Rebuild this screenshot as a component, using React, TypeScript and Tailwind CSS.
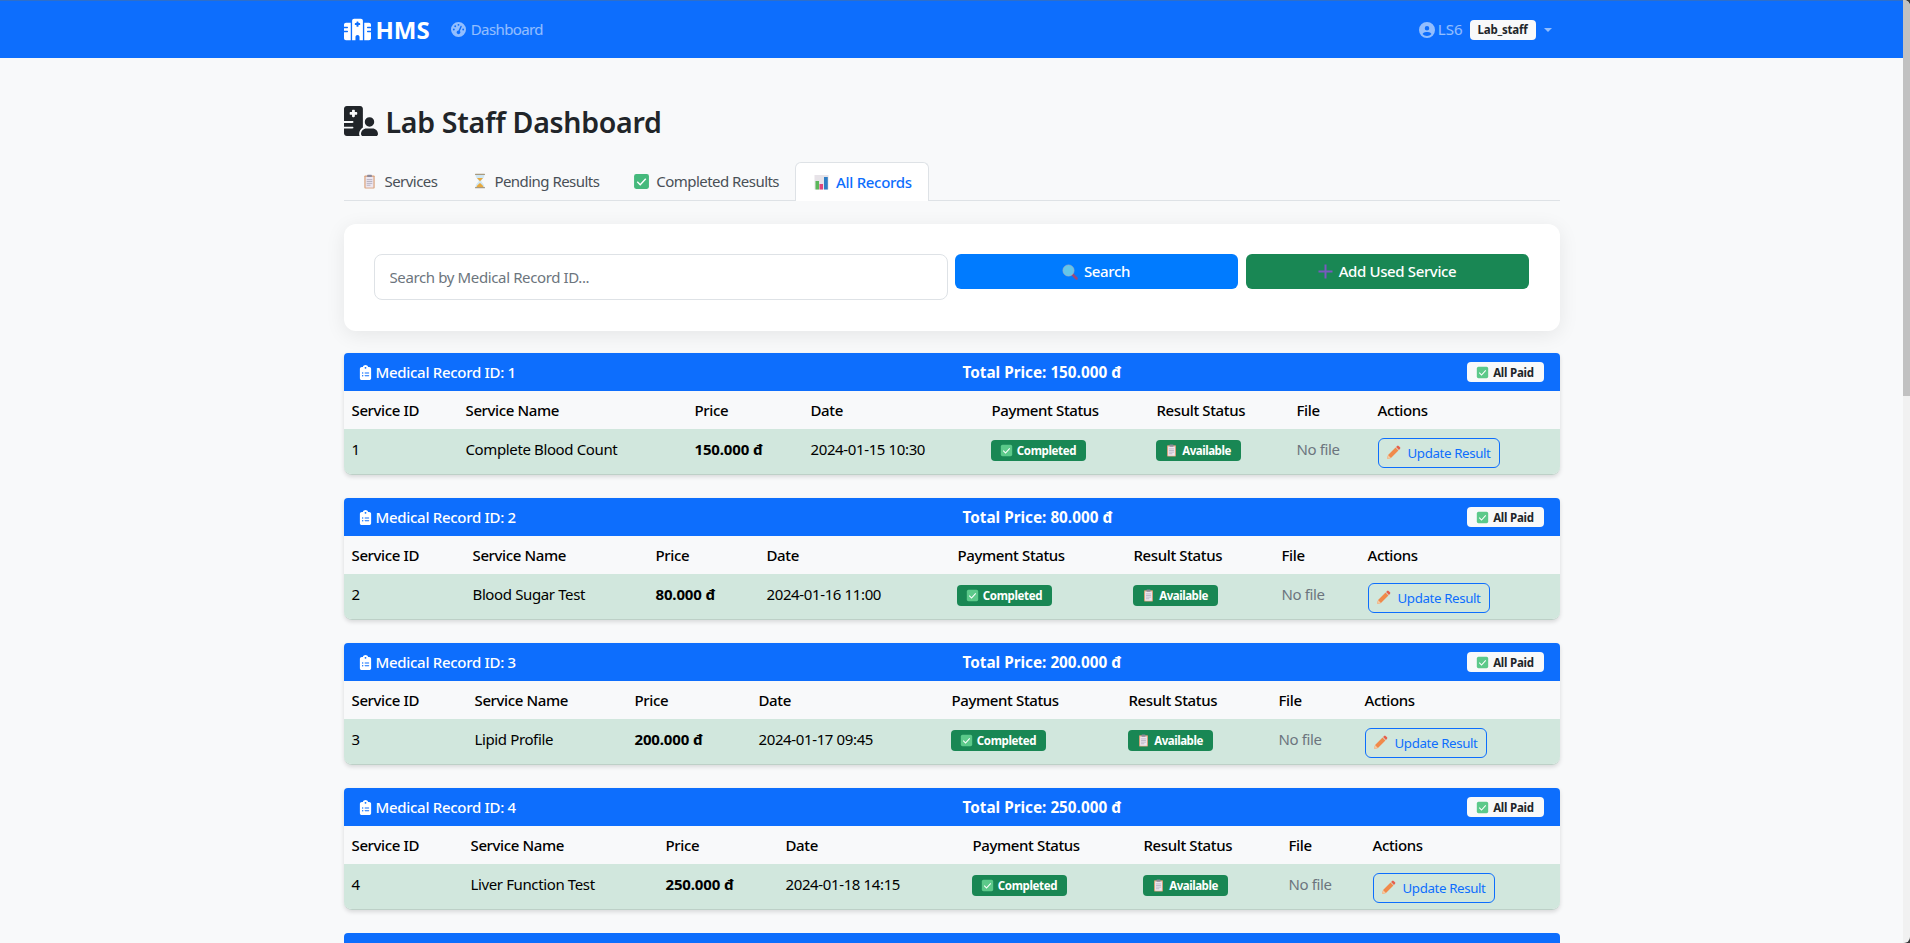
import React from "react";
import { FaHospital, FaHospitalUser, FaGaugeHigh, FaCircleUser, FaClipboardList } from "react-icons/fa6";

const Check = ({ s = 14, faded = false }: { s?: number; faded?: boolean }) => (
  <svg width={s} height={s} viewBox="0 0 16 16" className="shrink-0">
    <rect x="1" y="1" width="14" height="14" rx="2" fill={faded ? "#5cc98a" : "#45b97c"} />
    <path d="M4 8.3l2.8 2.8L12 5.4" fill="none" stroke="#fff" strokeWidth="1.3" />
  </svg>
);
const Clip = ({ s = 14 }: { s?: number }) => (
  <svg width={s} height={s} viewBox="0 0 16 16" className="shrink-0">
    <rect x="2.5" y="1.5" width="11" height="14" rx="1" fill="#d9a27c" />
    <rect x="3.8" y="3" width="8.4" height="11.5" fill="#ece6f0" />
    <rect x="5.5" y="0.7" width="5" height="2.6" rx="0.6" fill="#8e8a9a" />
    <path d="M5 6h6M5 8h6M5 10h6M5 12h4" stroke="#a7a3b3" strokeWidth="0.8" />
  </svg>
);
const Hourglass = () => (
  <svg width="12" height="16" viewBox="1.5 0 11 16" className="shrink-0">
    <path d="M2.5 1.5h9c0 3.5-3 5-3.3 6.5.3 1.5 3.3 3 3.3 6.5h-9c0-3.500 3-5 3.300-6.500C5.500 6.500 2.500 5 2.500 1.500z" fill="#cfe6f2" />
    <path d="M4 5h6L7 8.300zM3.500 14c.5-2 2.500-3 3.500-4 1 1 3 2 3.500 4z" fill="#e8a93c" />
    <rect x="2" y="0.700" width="10" height="1.300" rx="0.500" fill="#a89a80" />
    <rect x="2" y="14" width="10" height="1.300" rx="0.500" fill="#a89a80" />
  </svg>
);
const Chart = () => (
  <svg width="15" height="16" viewBox="0 0 15 16" className="shrink-0">
    <rect x="0.500" y="1" width="14" height="14.500" fill="#e7e3e8" />
    <rect x="1.500" y="7" width="3.500" height="8.500" fill="#5cb85c" />
    <rect x="5.500" y="10" width="3.500" height="5.500" fill="#e0457b" />
    <rect x="10" y="3" width="3.800" height="12.500" fill="#2f7ec4" />
  </svg>
);
const Lens = () => (
  <svg width="16" height="16" viewBox="0 0 16 16" className="shrink-0">
    <path d="M9.500 9.500l5 5" stroke="#9b4a7c" strokeWidth="2.600" strokeLinecap="round" />
    <circle cx="6.500" cy="6.500" r="5.500" fill="#63c6ea" />
    <circle cx="6.500" cy="6.500" r="5.500" fill="none" stroke="#9fb4c4" strokeWidth="0.800" />
  </svg>
);
const Plus = () => (
  <svg width="15" height="15" viewBox="0 0 15 15" className="shrink-0">
    <path d="M7.500 0.500v14M0.500 7.500h14" stroke="#7a58bf" strokeWidth="2" />
  </svg>
);
const Pencil = () => (
  <svg width="15" height="15" viewBox="0 0 14 14" className="shrink-0">
    <path d="M1 13l.9-3.600 7-7 2.700 2.700-7 7z" fill="#f08a4b" />
    <path d="M9.400 1.900l1-1a1 1 0 0 1 1.400 0l1.300 1.300a1 1 0 0 1 0 1.400l-1 1z" fill="#e5604d" />
    <path d="M1 13l.9-3.600 2.700 2.700z" fill="#f4c9a0" />
  </svg>
);

type Rec = { id: number; name: string; price: string; date: string; cols: number[] };
const records: Rec[] = [
  { id: 1, name: "Complete Blood Count", price: "150.000 đ", date: "2024-01-15 10:30", cols: [114, 229, 116, 181, 165, 140, 81, 190] },
  { id: 2, name: "Blood Sugar Test", price: "80.000 đ", date: "2024-01-16 11:00", cols: [121, 183, 111, 191, 176, 148, 86, 200] },
  { id: 3, name: "Lipid Profile", price: "200.000 đ", date: "2024-01-17 09:45", cols: [123, 160, 124, 193, 177, 150, 86, 203] },
  { id: 4, name: "Liver Function Test", price: "250.000 đ", date: "2024-01-18 14:15", cols: [119, 195, 120, 187, 171, 145, 84, 195] },
];
const heads = ["Service ID", "Service Name", "Price", "Date", "Payment Status", "Result Status", "File", "Actions"];

function RecordCard({ r }: { r: Rec }) {
  return (
    <section className="mb-[23px] rounded-b-lg rounded-t-[4px] overflow-hidden border-b border-[#bdd0c7] shadow-[0_2px_4px_rgba(0,0,0,0.13)]">
      <div className="h-[38px] bg-[#0d6efd] text-white grid grid-cols-[605px_1fr_auto] items-center pl-[14px] pr-[16px]">
        <div className="flex items-center gap-[3px] text-[15px] font-medium tracking-[-0.02em]">
          <FaClipboardList className="text-[15px]" />
          <span>Medical Record ID: {r.id}</span>
        </div>
        <div className="text-[15.3px] font-bold">Total Price: {r.price}</div>
        <div className="h-5 w-[77px] rounded-[4px] bg-[#f8f9fa] flex items-center justify-center gap-[4px] text-[#212529] text-[11.5px] font-bold tracking-[-0.02em]">
          <Check s={13} faded />
          <span className="pt-[1px]">All Paid</span>
        </div>
      </div>
      <table className="w-full table-fixed border-collapse text-[15px] tracking-[-0.025em] text-black">
        <colgroup>
          {r.cols.map((w, i) => (
            <col key={i} style={{ width: w }} />
          ))}
        </colgroup>
        <thead>
          <tr className="h-[38px] bg-[#f8f9fa]">
            {heads.map((h) => (
              <th key={h} className="px-[8px] text-left font-medium whitespace-nowrap">
                {h}
              </th>
            ))}
          </tr>
        </thead>
        <tbody>
          <tr className="h-[45px] bg-[#d1e7dd]">
            <td className="px-[8px] pb-[4px]">{r.id}</td>
            <td className="px-[8px] pb-[4px] whitespace-nowrap">{r.name}</td>
            <td className="px-[8px] pb-[4px] font-bold tracking-[-0.01em] whitespace-nowrap">{r.price}</td>
            <td className="px-[8px] pb-[4px] whitespace-nowrap">{r.date}</td>
            <td className="px-[7px]">
              <span className="inline-flex h-[21px] w-[95px] rounded-[4px] bg-[#198754] text-white items-center justify-center gap-[4px] text-[11.5px] font-bold tracking-[-0.03em]">
                <Check s={13} faded />
                Completed
              </span>
            </td>
            <td className="px-[7px]">
              <span className="inline-flex h-[21px] w-[85px] rounded-[4px] bg-[#198754] text-white items-center justify-center gap-[4px] text-[11.5px] font-bold tracking-[-0.04em]">
                <Clip s={13} />
                Available
              </span>
            </td>
            <td className="px-[8px] pb-[4px] text-[#6c757d] whitespace-nowrap">No file</td>
            <td className="px-[8px]">
              <button className="h-[30px] w-[122px] mt-[2px] rounded-[6px] border border-[#0d6efd] text-[#0d6efd] text-[13.3px] flex items-center justify-center gap-[6px]">
                <Pencil />
                <span className="pt-[2px]">Update Result</span>
              </button>
            </td>
          </tr>
        </tbody>
      </table>
    </section>
  );
}

export default function App() {
  return (
    <div className="h-[943px] overflow-hidden flex bg-[#3a3a3a] text-[#212529] font-['Noto_Sans','Open_Sans',sans-serif]">
      <div className="flex-1 min-w-0 overflow-hidden bg-[#f8f9fa]">
        <nav className="h-[58px] bg-[#0d6efd] border-t border-[#2f6fc9]">
          <div className="w-[1216px] mx-auto h-full flex items-center justify-between">
            <div className="flex items-center">
              <div className="flex items-center gap-[5px] text-white text-[24px] leading-none font-bold">
                <FaHospital className="text-[27px]" />
                <span>HMS</span>
              </div>
              <div className="ml-[21px] flex items-center gap-[5px] text-[15px] tracking-[-0.04em] text-white/55">
                <FaGaugeHigh className="text-[15px]" />
                <span>Dashboard</span>
              </div>
            </div>
            <div className="flex items-center mr-[8px]">
              <FaCircleUser className="text-[16px] text-white/55" />
              <span className="ml-[3px] text-[15px] text-white/55">LS6</span>
              <span className="ml-[7px] w-[66px] h-5 rounded-[4px] bg-[#f8f9fa] flex items-center justify-center text-[11.5px] font-bold tracking-[-0.02em] text-[#212529]">
                Lab_staff
              </span>
              <span className="ml-[8px] w-0 h-0 border-x-[4px] border-x-transparent border-t-[4px] border-t-white/55" />
            </div>
          </div>
        </nav>
        <main className="w-[1216px] mx-auto">
          <div className="h-[104px] pt-[44px] flex items-start gap-[8px]">
            <FaHospitalUser className="text-[34px] mt-[2px] text-[#212529]" />
            <h1 className="text-[28.5px] leading-[40px] font-semibold tracking-[-0.01em]">Lab Staff Dashboard</h1>
          </div>
          <div className="h-[39px] flex items-end border-b border-[#dee2e6] text-[15px] tracking-[-0.036em] text-[#495057]">
            <div className="h-[38px] px-4 flex items-center"><span className="w-[25px] pl-[2px]"><Clip s={15} /></span>Services</div>
            <div className="h-[38px] px-4 flex items-center"><span className="w-[25px] pl-[5px]"><Hourglass /></span>Pending Results</div>
            <div className="h-[38px] px-4 flex items-center"><span className="w-[25px] pl-[2px]"><Check s={17} /></span>Completed Results</div>
            <div className="h-[39px] -mb-px px-4 flex items-center bg-white border border-b-0 border-[#dee2e6] rounded-t-[6px] text-[#0d6efd] font-medium tracking-[-0.02em]"><span className="w-[24px] pl-[2px]"><Chart /></span>All Records</div>
          </div>
          <div className="mt-[23px] h-[107px] bg-white rounded-xl shadow-[0_4px_20px_rgba(0,0,0,0.08)] px-[30px] pt-[30px] flex items-start gap-[8px]">
            <input readOnly placeholder="Search by Medical Record ID..." className="w-[574px] -mr-px h-[46px] rounded-lg border border-[#dee2e6] px-[15px] text-[15px] tracking-[-0.025em] placeholder:text-[#6c757d] outline-none" />
            <button className="w-[283px] h-[35px] rounded-md bg-[#007bff] text-white text-[15px] font-medium tracking-[-0.025em] flex items-center justify-center gap-[6px]"><Lens />Search</button>
            <button className="w-[283px] h-[35px] rounded-md bg-[#198754] text-white text-[15px] font-medium tracking-[-0.025em] flex items-center justify-center gap-[6px]"><Plus />Add Used Service</button>
          </div>
          <div className="mt-[22px]">
            {records.map((r) => <RecordCard key={r.id} r={r} />)}
            <div className="h-[38px] bg-[#0d6efd] rounded-t-[4px]" />
          </div>
        </main>
      </div>
      <aside className="w-[7px] bg-[#f1f1f1] rounded-r-[6px] overflow-hidden">
        <div className="h-[396px] bg-[#c1c1c1]" />
      </aside>
    </div>
  );
}
